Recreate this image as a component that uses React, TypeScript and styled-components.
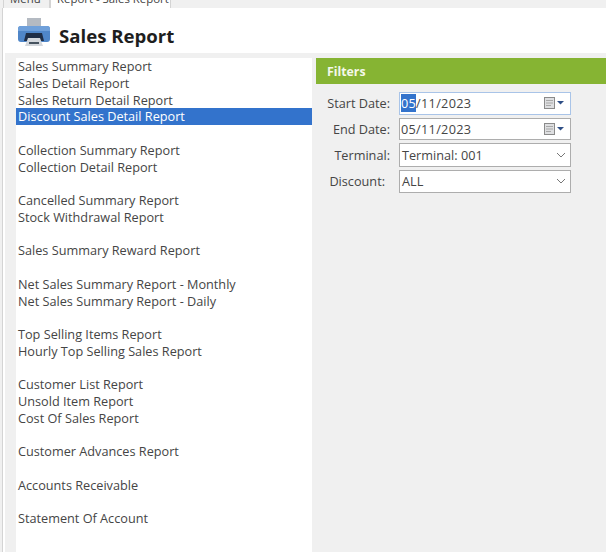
import React from 'react';
import styled, { createGlobalStyle } from 'styled-components';

const GlobalStyle = createGlobalStyle`
    html, body {
        margin: 0;
        padding: 0;
        width: 606px;
        height: 552px;
        overflow: hidden;
        background: #f0f0f0;
    }
    * {
        box-sizing: border-box;
    }
`;

const reports = [
    'Sales Summary Report',
    'Sales Detail Report',
    'Sales Return Detail Report',
    'Discount Sales Detail Report',
    '',
    'Collection Summary Report',
    'Collection Detail Report',
    '',
    'Cancelled Summary Report',
    'Stock Withdrawal Report',
    '',
    'Sales Summary Reward Report',
    '',
    'Net Sales Summary Report - Monthly',
    'Net Sales Summary Report - Daily',
    '',
    'Top Selling Items Report',
    'Hourly Top Selling Sales Report',
    '',
    'Customer List Report',
    'Unsold Item Report',
    'Cost Of Sales Report',
    '',
    'Customer Advances Report',
    '',
    'Accounts Receivable',
    '',
    'Statement Of Account',
];

const PrinterIcon = () => (
    <svg width="32" height="28" viewBox="0 0 32 28">
        <path d="M9 0h14v10H9z" fill="#b4bac2" />
        <path d="M3 8h26a3 3 0 0 1 3 3v10a3 3 0 0 1-3 3H3a3 3 0 0 1-3-3V11a3 3 0 0 1 3-3z" fill="#4f86c8" />
        <path d="M3 8h26a3 3 0 0 1 3 3v2H0v-2a3 3 0 0 1 3-3z" fill="#6fa0da" />
        <path d="M6 23l2-8h16l2 8z" fill="#1f2e46" />
        <path d="M10 20h12l3 8H7z" fill="#d3d7dc" />
        <path d="M11 24h10v2H11z" fill="#46535f" />
    </svg>
);

const CalendarIcon = () => (
    <svg width="21" height="12" viewBox="0 0 21 12">
        <rect x="0.5" y="0.5" width="10" height="11" fill="#dedfe1" stroke="#8a8a8a" />
        <path d="M2 3.5h7M2 6h7M2 8.5h5" stroke="#a8a8a8" />
        <path d="M13 4h7l-3.5 3.5z" fill="#2f4f86" />
    </svg>
);

const ChevronIcon = () => (
    <svg width="10" height="6" viewBox="0 0 10 6">
        <path d="M1 1l4 4 4-4" fill="none" stroke="#777" strokeWidth="1" />
    </svg>
);

const App = () => (
    <Window>
        <GlobalStyle />
        <TabBar>
            <Tab $width={47}>Menu</Tab>
            <Tab $width={121} $active>
                Report - Sales Report
            </Tab>
        </TabBar>
        <Page>
            <Header>
                <PrinterIcon />
                <Title>Sales Report</Title>
            </Header>
            <Body>
                <ReportList>
                    {reports.map((name, i) => (
                        <ReportRow key={i} $selected={name === 'Discount Sales Detail Report'}>
                            {name}
                        </ReportRow>
                    ))}
                </ReportList>
                <FilterPanel>
                    <FilterHeader>Filters</FilterHeader>
                    <FilterGrid>
                        <Label>Start Date:</Label>
                        <Field $focused>
                            <DateValue>
                                <Selected>05</Selected>/11/2023
                            </DateValue>
                            <CalendarIcon />
                        </Field>
                        <Label>End Date:</Label>
                        <Field>
                            <DateValue>05/11/2023</DateValue>
                            <CalendarIcon />
                        </Field>
                        <Label>Terminal:</Label>
                        <Field $select>
                            <SelectValue>Terminal: 001</SelectValue>
                            <ChevronIcon />
                        </Field>
                        <Label $shifted>Discount:</Label>
                        <Field $select>
                            <SelectValue>ALL</SelectValue>
                            <ChevronIcon />
                        </Field>
                    </FilterGrid>
                </FilterPanel>
            </Body>
        </Page>
    </Window>
);

const Window = styled.div`
    width: 606px;
    height: 552px;
    overflow: hidden;
    display: flex;
    flex-direction: column;
    font-family: 'Open Sans', 'Liberation Sans', sans-serif;
    font-size: 12.7px;
    color: #454545;
    background: #f0f0f0;
`;

const TabBar = styled.div`
    height: 8px;
    flex: none;
    display: flex;
    align-items: flex-end;
    padding-left: 3px;
    overflow: hidden;
`;

const Tab = styled.div<{ $active?: boolean; $width: number }>`
    flex: none;
    width: ${({ $width }) => $width}px;
    height: 20px;
    line-height: 19px;
    padding-left: 6px;
    font-size: 11.4px;
    white-space: nowrap;
    color: #444;
    border: 1px solid #d4d4d4;
    border-bottom: none;
    background: ${({ $active }) => ($active ? '#ffffff' : '#f0f0f0')};
`;

const Page = styled.div`
    flex: 1;
    min-height: 0;
    display: flex;
    flex-direction: column;
    margin-left: 2px;
    border-left: 1px solid #d4d4d4;
    background: #ffffff;
`;

const Header = styled.div`
    height: 45px;
    flex: none;
    display: flex;
    align-items: flex-start;
    gap: 9px;
    padding: 10px 0 0 15px;
`;

const Title = styled.div`
    margin-top: 5px;
    font-size: 18.6px;
    font-weight: 700;
    color: #1e1e1e;
`;

const Body = styled.div`
    flex: 1;
    min-height: 0;
    display: flex;
    margin-left: 2px;
    padding: 5px 0 0 11px;
    background: #f0f0f0;
`;

const ReportList = styled.div`
    width: 296px;
    flex: none;
    background: #ffffff;
`;

const ReportRow = styled.div<{ $selected?: boolean }>`
    height: 16.75px;
    line-height: 17.75px;
    padding-left: 2px;
    white-space: nowrap;
    background: ${({ $selected }) => ($selected ? '#3373cc' : 'transparent')};
    color: ${({ $selected }) => ($selected ? '#ffffff' : '#454545')};
`;

const FilterPanel = styled.div`
    flex: 1;
    min-width: 0;
    padding-left: 4px;
`;

const FilterHeader = styled.div`
    height: 26px;
    line-height: 27px;
    padding-left: 11px;
    font-size: 12.3px;
    font-weight: 700;
    color: #f4f8ea;
    background: #86b433;
`;

const FilterGrid = styled.div`
    display: grid;
    grid-template-columns: 74px 172px;
    column-gap: 9px;
    row-gap: 3px;
    padding-top: 8px;
    align-items: center;
`;

const Label = styled.div<{ $shifted?: boolean }>`
    text-align: right;
    white-space: nowrap;
    padding-right: ${({ $shifted }) => ($shifted ? '5px' : '0')};
`;

const Field = styled.div<{ $focused?: boolean; $select?: boolean }>`
    height: ${({ $select }) => ($select ? '23.5px' : '22.5px')};
    display: flex;
    align-items: center;
    justify-content: space-between;
    padding: 0 ${({ $select }) => ($select ? '4px' : '5px')} 0 ${({ $select }) => ($select ? '2px' : '1px')};
    background: #ffffff;
    border: 1px solid ${({ $focused }) => ($focused ? '#a9c4e8' : '#adadad')};
`;

const DateValue = styled.div`
    white-space: nowrap;
    letter-spacing: 0.3px;
`;

const SelectValue = styled.div`
    white-space: nowrap;
`;

const Selected = styled.span`
    background: #3373cc;
    color: #ffffff;
`;

export default App;
